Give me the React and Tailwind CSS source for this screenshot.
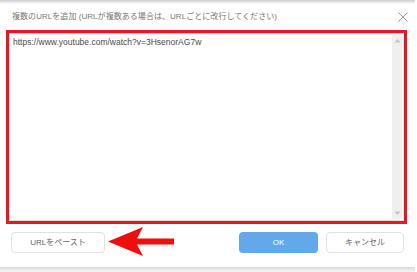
import React from "react";

const FONT = "font-['Liberation_Sans','Noto_Sans_CJK_JP',sans-serif]";

const ScrollBar = () => (
  <div className="w-[10px] bg-[#efefef] flex flex-col justify-between items-center py-[3px] my-[1px] mr-[1px]">
    <svg width="7" height="5" viewBox="0 0 7 5">
      <path d="M0.5 4.5 L3.5 1 L6.5 4.5 Z" fill="#c4c4c4" />
    </svg>
    <svg width="7" height="5" viewBox="0 0 7 5">
      <path d="M0.5 0.5 L3.5 4 L6.5 0.5 Z" fill="#c4c4c4" />
    </svg>
  </div>
);

const App = () => {
  return (
    <div className={`relative w-[417px] h-[272px] bg-white overflow-hidden ${FONT}`}>
      {/* shadow from above */}
      <div className="h-[4px] mr-[2px] bg-gradient-to-b from-[#cdcdcd] to-white" />

      {/* TITLE */}
      <div className="h-[26px] flex items-center justify-between pl-[12px] pr-[9px]">
        <span className="text-[8px] text-[#777] tracking-[0.05px]">
          複数のURLを追加 (URLが複数ある場合は、URLごとに改行してください)
        </span>
        <svg width="10" height="10" viewBox="0 0 10 10">
          <path d="M0.5 0.5 L9.5 9.5 M9.5 0.5 L0.5 9.5" stroke="#9a9a9a" strokeWidth="1" />
        </svg>
      </div>

      {/* URL BOX */}
      <div className="ml-[6px] w-[401px] h-[194px] border-[3px] border-[#e8161f]">
        <div className="h-full flex border border-[#dcdcdc] bg-white">
          <div className="flex-1 pl-[3px] pt-[4px] text-[8.5px] text-[#4a4a4a] leading-none">
            https://www.youtube.com/watch?v=3HsenorAG7w
          </div>
          <ScrollBar />
        </div>
      </div>

      {/* BUTTONS */}
      <div className="flex items-center mt-[8px] pl-[11px] pr-[13px]">
        <button className="w-[94px] h-[21px] rounded-[4px] border border-[#e2e2e2] bg-white text-[8px] text-[#666]">
          URLをペースト
        </button>
        <div className="flex-1" />
        <button className="w-[79px] h-[21px] rounded-[4px] bg-[#63a8e8] text-[8px] text-white">
          OK
        </button>
        <button className="ml-[8px] w-[78px] h-[21px] rounded-[4px] border border-[#e2e2e2] bg-white text-[8px] text-[#666]">
          キャンセル
        </button>
      </div>

      {/* bottom shadow */}
      <div className="absolute left-0 right-[2px] bottom-0 h-[5px] bg-gradient-to-b from-[#dadada] to-[#f6f6f6]" />

      {/* annotation arrow */}
      <svg
        className="absolute left-[108px] top-[227px]"
        width="67"
        height="30"
        viewBox="0 0 67 30"
      >
        <path d="M0 14.5 L35 0 L29 11.5 L66 11.5 L66 17.5 L29 17.5 L35 29 Z" fill="#f20d0d" />
      </svg>
    </div>
  );
};

export default App;
